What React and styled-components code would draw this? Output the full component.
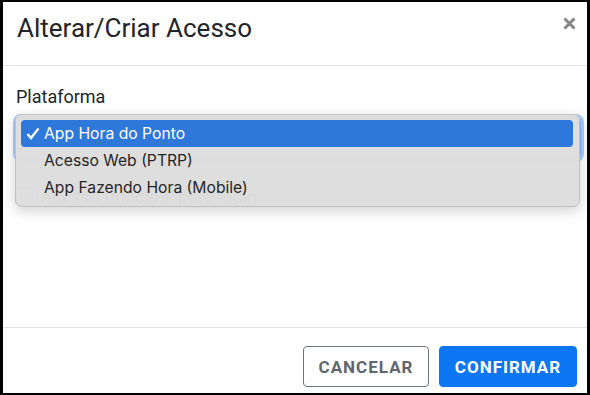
import React from 'react';
import styled, { createGlobalStyle } from 'styled-components';

const GlobalStyle = createGlobalStyle`
  html, body {
    margin: 0;
    padding: 0;
    background: #fff;
  }
  body {
    font-family: Roboto, "Liberation Sans", Arial, sans-serif;
    color: #212529;
  }
`;

const Frame = styled.div`
  width: 590px;
  height: 395px;
  box-sizing: border-box;
  border: 2px solid #000;
  border-left-width: 3px;
  border-right-width: 3px;
  display: flex;
  flex-direction: column;
  background: #fff;
  overflow: hidden;
`;

const Header = styled.div`
  height: 64px;
  box-sizing: border-box;
  padding: 11px 11px 0 14px;
  display: flex;
  align-items: flex-start;
  justify-content: space-between;
  border-bottom: 1px solid #dee2e6;
`;

const Title = styled.h5`
  margin: 0;
  font-size: 26px;
  font-weight: 400;
  line-height: 30px;
  color: #212529;
`;

const Close = styled.button`
  border: none;
  background: none;
  padding: 0;
  margin-top: 4px;
  width: 13px;
  height: 13px;
  cursor: pointer;
  display: flex;
`;

const Body = styled.div`
  flex: 1;
  padding: 20px 6px 0 13px;
  position: relative;
`;

const Label = styled.label`
  display: block;
  font-size: 18px;
  line-height: 22px;
  margin-bottom: 9px;
`;

const SelectBox = styled.div`
  height: 42px;
  box-sizing: border-box;
  border: 1px solid #86b7fe;
  border-radius: 5px;
  box-shadow: 0 0 0 3px rgba(13, 110, 253, 0.35);
  background: #fff;
`;

const CheckRow = styled.div`
  display: flex;
  align-items: center;
  gap: 8px;
  height: 20px;
  margin-top: 27px;
  font-size: 18px;
`;

const Check = styled.span`
  width: 15px;
  height: 15px;
  border: 1px solid #0d6efd;
  border-radius: 3px;
  background: #fff;
`;

const Menu = styled.ul`
  position: absolute;
  left: 12px;
  top: 48px;
  width: 565px;
  box-sizing: border-box;
  margin: 0;
  padding: 5px 6px 5px 5px;
  list-style: none;
  background: rgba(221, 221, 221, 0.98);
  border: 1px solid #c2c2c2;
  border-radius: 6px;
  box-shadow: 0 4px 14px rgba(0, 0, 0, 0.18);
  font-family: Inter, "Liberation Sans", Arial, sans-serif;
`;

const Item = styled.li`
  height: 27px;
  display: flex;
  align-items: center;
  padding-left: 5px;
  font-size: 15.7px;
  border-radius: 4px;
  color: ${(p) => (p.$active ? '#fff' : '#262626')};
  background: ${(p) => (p.$active ? '#2e78dc' : 'transparent')};
`;

const Tick = styled.span`
  width: 18px;
  display: flex;
  align-items: center;
`;

function CheckMark() {
  return (
    <svg width="14" height="13" viewBox="0 0 14 13">
      <path d="M1.5 7 L5 11 L12.5 1.5" fill="none" stroke="#fff" strokeWidth="2.4" />
    </svg>
  );
}

const Footer = styled.div`
  border-top: 1px solid #dee2e6;
  height: 66px;
  box-sizing: border-box;
  padding: 18px 10px 0 0;
  display: flex;
  justify-content: flex-end;
  align-items: flex-start;
  gap: 10px;
`;

const Button = styled.button`
  height: 41px;
  box-sizing: border-box;
  padding: 0;
  border-radius: 4px;
  font-family: Roboto, "Liberation Sans", Arial, sans-serif;
  font-size: 17px;
  font-weight: 700;
  letter-spacing: 1px;
  cursor: pointer;
  border: 1px solid ${(p) => (p.$primary ? '#0d76f2' : '#6c757d')};
  background: ${(p) => (p.$primary ? '#0d76f2' : '#fff')};
  color: ${(p) => (p.$primary ? '#fff' : '#5f666d')};
  width: ${(p) => p.$w}px;
`;

export default function App() {
  return (
    <>
      <GlobalStyle />
      <Frame>
        <Header>
          <Title>Alterar/Criar Acesso</Title>
          <Close aria-label="Fechar">
            <svg width="13" height="13" viewBox="0 0 13 13">
              <path d="M1.5 1.5 L11.5 11.5 M11.5 1.5 L1.5 11.5" stroke="#858585" strokeWidth="3" />
            </svg>
          </Close>
        </Header>
        <Body>
          <Label>Plataforma</Label>
          <SelectBox />
          <CheckRow>
            <Check />
            <span>Acesso principal para login</span>
          </CheckRow>
          <Menu>
            <Item $active>
              <Tick><CheckMark /></Tick>App Hora do Ponto
            </Item>
            <Item>
              <Tick />Acesso Web (PTRP)
            </Item>
            <Item>
              <Tick />App Fazendo Hora (Mobile)
            </Item>
          </Menu>
        </Body>
        <Footer>
          <Button $w={126}>CANCELAR</Button>
          <Button $primary $w={138}>CONFIRMAR</Button>
        </Footer>
      </Frame>
    </>
  );
}
